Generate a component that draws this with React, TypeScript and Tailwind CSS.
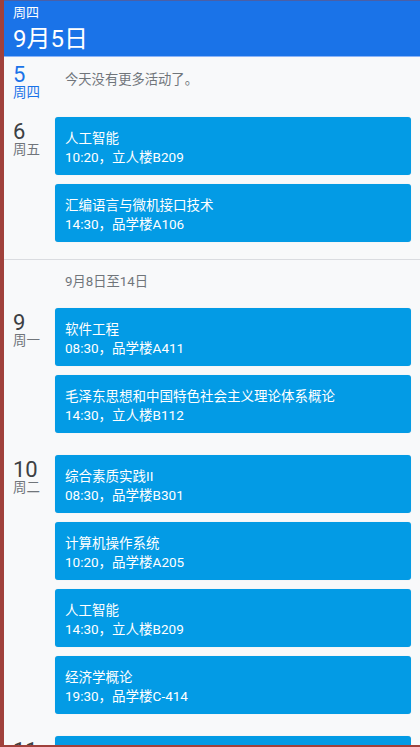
import React from "react";

type Ev = { title: string; sub: string };

const font = { fontFamily: 'Roboto, "Noto Sans CJK SC", sans-serif' };

function Card({ ev }: { ev: Ev }) {
  return (
    <div className="h-[58px] rounded-[3px] bg-[#039be5] pl-[10px] pt-[12px] text-white text-[13.5px] leading-[19px] shadow-[0_0_1px_rgba(0,0,0,0.15)]">
      <div>{ev.title}</div>
      <div>{ev.sub}</div>
    </div>
  );
}

function DayLabel({ num, wd, blue }: { num: string; wd: string; blue?: boolean }) {
  return (
    <div className="w-[51px] shrink-0 pl-[9px]">
      <div className={`pt-[3px] text-[22px] leading-[24px] ${blue ? "text-[#1a73e8]" : "text-[#3c4043]"}`}>{num}</div>
      <div className={`-mt-[3px] text-[13.5px] leading-[16px] ${blue ? "text-[#1a73e8]" : "text-[#70757a]"}`}>{wd}</div>
    </div>
  );
}

function DayGroup({ num, wd, events, className }: { num: string; wd: string; events: Ev[]; className?: string }) {
  return (
    <div className={`flex ${className ?? ""}`}>
      <DayLabel num={num} wd={wd} />
      <div className="flex flex-1 flex-col gap-[9px] mr-[9px]">
        {events.map((e, i) => (
          <Card key={i} ev={e} />
        ))}
      </div>
    </div>
  );
}

export default function App() {
  return (
    <div className="flex h-[747px] w-[420px] flex-col overflow-hidden bg-[#a0413b]" style={font}>
      <div className="flex min-h-0 flex-1">
        <div className="w-[4px] shrink-0 bg-[#a0413b]" />
        <div className="flex min-w-0 flex-1 flex-col bg-[#f8f9fa]">
          <div className="h-px bg-[#4b5fa6]" />
          <div className="h-[55px] shrink-0 bg-[#1a73e8] pl-[9px] pt-[3px] text-white">
            <div className="text-[13px] leading-[18px]">周四</div>
            <div className="mt-[3px] text-[24px] leading-[28px]">9月5日</div>
          </div>
          <div className="h-px bg-[#8ab4f8]" />
          <div className="min-h-0 flex-1 overflow-hidden">
            <div className="mt-[3px] flex">
              <DayLabel num="5" wd="周四" blue />
              <div className="pl-[10px] pt-[10px] text-[13.3px] leading-[19px] text-[#70757a]">今天没有更多活动了。</div>
            </div>
            <DayGroup
              className="mt-[17px]"
              num="6"
              wd="周五"
              events={[
                { title: "人工智能", sub: "10:20，立人楼B209" },
                { title: "汇编语言与微机接口技术", sub: "14:30，品学楼A106" },
              ]}
            />
            <div className="mt-[17px] h-px bg-[#dadce0]" />
            <div className="mt-[12px] pl-[61px] text-[13.3px] leading-[19px] text-[#70757a]">9月8日至14日</div>
            <DayGroup
              className="mt-[17px]"
              num="9"
              wd="周一"
              events={[
                { title: "软件工程", sub: "08:30，品学楼A411" },
                { title: "毛泽东思想和中国特色社会主义理论体系概论", sub: "14:30，立人楼B112" },
              ]}
            />
            <DayGroup
              className="mt-[22px]"
              num="10"
              wd="周二"
              events={[
                { title: "综合素质实践II", sub: "08:30，品学楼B301" },
                { title: "计算机操作系统", sub: "10:20，品学楼A205" },
                { title: "人工智能", sub: "14:30，立人楼B209" },
                { title: "经济学概论", sub: "19:30，品学楼C-414" },
              ]}
            />
            <DayGroup
              className="mt-[22px]"
              num="11"
              wd="周三"
              events={[{ title: "数据库", sub: "08:30" }]}
            />
          </div>
        </div>
      </div>
      <div className="h-[2px] shrink-0 bg-[#a0413b]" />
    </div>
  );
}
